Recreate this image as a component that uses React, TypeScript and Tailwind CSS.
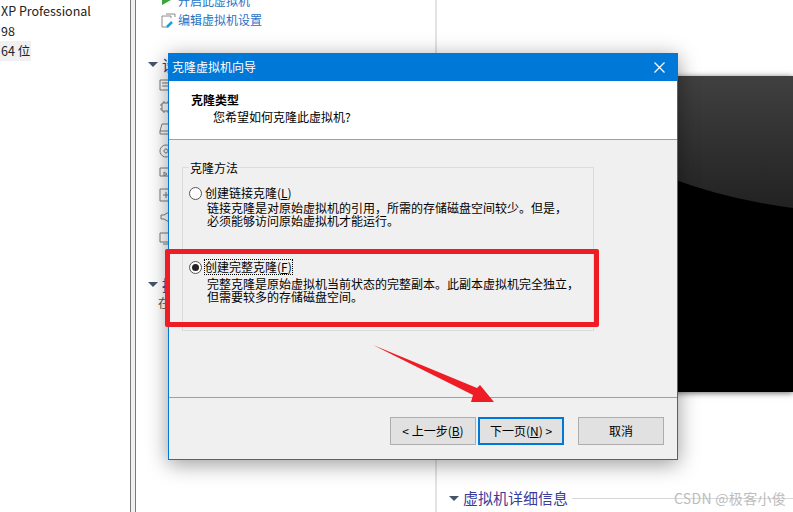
import React from 'react';

const cjk = "font-['Noto_Sans_CJK_SC','Noto_Sans',sans-serif]";

function SideIcon({ d }: { d: string }) {
  return (
    <svg width="14" height="14" viewBox="0 0 14 14" fill="none" stroke="#7d7d7d" strokeWidth="1">
      <path d={d} />
    </svg>
  );
}

const sideIcons = [
  'M1 2h12v10H1zM3 5h8M3 8h8',
  'M3 3h8v8H3zM1 5h2M1 9h2M11 5h2M11 9h2M5 1v2M9 1v2M5 11v2M9 11v2',
  'M3 2h9l1 7H1zM1 9v3h12V9',
  'M7 1a6 6 0 1 0 .01 0M7 5a2 2 0 1 0 .01 0',
  'M1 2h11v8H1zM5 6l3 2-3 2z',
  'M1 1h12v12H1zM4 7h6M7 4v6',
  'M2 5h3l5-3v10L5 9H2z',
  'M1 1h12v9H1zM4 12h6',
];

function WizardButton({ children, focused }: { children: React.ReactNode; focused?: boolean }) {
  return (
    <button
      className={
        focused
          ? 'w-[86px] h-[28px] bg-[#e1e1e1] border-2 border-[#0078d7] text-[12px] text-black whitespace-pre'
          : 'w-[86px] h-[28px] bg-[#e1e1e1] border border-[#adadad] text-[12px] text-black whitespace-pre'
      }
    >
      {children}
    </button>
  );
}

export default function App() {
  return (
    <div className={`relative flex w-[793px] h-[512px] overflow-hidden bg-white text-black ${cjk}`}>
      {/* left library pane */}
      <div className="w-[130px] shrink-0 flex flex-col items-start pt-[1px] text-[12.5px] leading-[20px] text-[#222]">
        <div className="pl-[1px]">XP Professional</div>
        <div className="pl-[1px]">98</div>
        <div className="pl-[1px] pr-[1px] bg-[#f0f0f0]">64 位</div>
      </div>
      <div className="w-[6px] shrink-0 bg-[#f0f0f0] border-x border-[#7a7a7a]" />

      {/* vm summary pane */}
      <div className="w-[301px] shrink-0 border-r-2 border-[#e3e3e3] pl-[12px] text-[12px]">
        <div className="flex items-start gap-[6px] h-[12px] pl-[14px] text-[#2a72c4] leading-[12px]">
          <svg width="10" height="6" viewBox="0 0 10 6" className="shrink-0">
            <path d="M0 0H9L0 5Z" fill="#3aa53a" />
          </svg>
          <span className="-mt-[5px] whitespace-nowrap">开启此虚拟机</span>
        </div>
        <div className="flex items-center gap-[2px] h-[16px] pl-[13px] text-[#2a72c4]">
          <svg width="15" height="15" viewBox="0 0 15 15" fill="none">
            <path d="M5 1h9v3M1 3h9v2M1 3v11h6" stroke="#8a8a8a" />
            <path d="M6 14l5-5" stroke="#1aa0dc" strokeWidth="2.5" />
          </svg>
          <span className="whitespace-nowrap">编辑虚拟机设置</span>
        </div>
        <div className="flex items-center gap-[4px] mt-[29px] h-[14px]">
          <span className="w-0 h-0 border-x-[5px] border-x-transparent border-t-[5px] border-t-[#44546a]" />
          <span className="text-[15px] text-[#3b3b9e] leading-none">设备</span>
        </div>
        <div className="flex flex-col gap-[8px] mt-[7px] pl-[11px]">
          {sideIcons.map((d) => (
            <SideIcon key={d} d={d} />
          ))}
        </div>
        <div className="flex items-center gap-[4px] mt-[31px] h-[14px]">
          <span className="w-0 h-0 border-x-[5px] border-x-transparent border-t-[5px] border-t-[#44546a]" />
          <span className="text-[15px] text-[#3b3b9e] leading-none">描述</span>
        </div>
        <div className="mt-[4px] pl-[10px] text-[12px] text-[#555] leading-[16px]">在此处键入</div>
      </div>

      {/* console preview */}
      <div className="flex-1 flex flex-col min-w-0">
        <div className="h-[76px] bg-white" />
        <div className="h-[316px] relative overflow-hidden bg-black shadow-[0_1px_6px_rgba(0,0,0,0.6)]">
          <div className="absolute left-[-77px] top-[-770px] w-[1000px] h-[906px] rounded-[50%] bg-[linear-gradient(to_bottom,#404040_85%,#212121_100%)]" />
        </div>
        <div className="flex-1 flex items-end pb-[4px] pl-[12px]">
          <div className="flex items-center gap-[4px] w-full">
            <span className="w-0 h-0 border-x-[5px] border-x-transparent border-t-[5px] border-t-[#44546a]" />
            <span className="text-[15px] leading-[20px] text-[#3b3b9e] whitespace-nowrap">虚拟机详细信息</span>
            <span className="flex-1 h-px bg-[#d8d8d8]" />
          </div>
        </div>
      </div>

      {/* clone wizard window */}
      <div className="absolute left-[168px] top-[53px] w-[510px] h-[407px] flex flex-col bg-[#f0f0f0] border border-[#0078d7] shadow-[0_4px_20px_rgba(0,0,0,0.4)]">
        <div className="h-[27px] shrink-0 bg-[#0078d7] flex items-center justify-between pl-[3px] pr-[12px] pb-[2px] text-white text-[12px]">
          <span>克隆虚拟机向导</span>
          <svg width="11" height="11" viewBox="0 0 11 11" stroke="white" strokeWidth="1.2" className="mt-[2px]">
            <path d="M0.5 0.5l10 10M10.5 0.5l-10 10" />
          </svg>
        </div>
        <div className="h-[59px] shrink-0 bg-white border-b border-[#a0a0a0] pl-[22px] pt-[10px]">
          <div className="text-[12px] leading-[17px] font-bold">克隆类型</div>
          <div className="text-[12px] leading-[17px] pl-[22px]">您希望如何克隆此虚拟机?</div>
        </div>

        <div className="flex-1 px-[13px] pt-[27px]">
          <div className="relative h-[164px] w-[412px] border border-[#dcdcdc] pl-[6px] pt-[16px]">
            <span className="absolute left-[6px] top-[-8px] bg-[#f0f0f0] px-[1px] text-[12px] leading-[16px]">克隆方法</span>
            <div className="flex items-center gap-[3px] h-[18px]">
              <span className="w-[13px] h-[13px] rounded-full border border-[#555] bg-white" />
              <span className="text-[12px] leading-[18px]">创建链接克隆(<u>L</u>)</span>
            </div>
            <div className="pl-[18px] -mt-[1px] text-[12px] leading-[13px]">
              <div>{'链接克隆是对原始虚拟机的引用\uFF0C所需的存储磁盘空间较少。但是\uFF0C'}</div>
              <div>必须能够访问原始虚拟机才能运行。</div>
            </div>
            <div className="flex items-center gap-[3px] h-[18px] mt-[31px]">
              <span className="w-[13px] h-[13px] rounded-full border border-[#555] bg-white flex items-center justify-center">
                <span className="w-[7px] h-[7px] rounded-full bg-[#222]" />
              </span>
              <span className="text-[12px] leading-[14px] outline-1 outline-dotted outline-black">创建完整克隆(<u>F</u>)</span>
            </div>
            <div className="pl-[18px] mt-[1px] text-[12px] leading-[13px]">
              <div>{'完整克隆是原始虚拟机当前状态的完整副本。此副本虚拟机完全独立\uFF0C'}</div>
              <div>但需要较多的存储磁盘空间。</div>
            </div>
          </div>
        </div>

        <div className="h-[62px] shrink-0 border-t border-[#a0a0a0] flex items-start pt-[19px] pl-[221px] gap-[2px]">
          <WizardButton>{'< 上一步('}<u>B</u>{')'}</WizardButton>
          <WizardButton focused>{'下一页('}<u>N</u>{') >'}</WizardButton>
          <div className="ml-[12px]">
            <WizardButton>取消</WizardButton>
          </div>
        </div>
      </div>

      {/* red highlight box */}
      <div className="absolute left-[165px] top-[249px] w-[434px] h-[78px] border-[5px] border-[#ee1c25] rounded-[2px]" />

      {/* red arrow */}
      <svg className="absolute left-[370px] top-[340px]" width="130" height="66" viewBox="0 0 130 66">
        <path d="M3 5L107 48L110 45L124 62L101 62L103 55Z" fill="#ee1c25" />
      </svg>

      {/* watermark */}
      <div className="absolute left-[674px] top-[488px] text-[14px] tracking-[0.3px] leading-[20px] text-[#bdbdbd] whitespace-nowrap">CSDN @极客小俊</div>
    </div>
  );
}
